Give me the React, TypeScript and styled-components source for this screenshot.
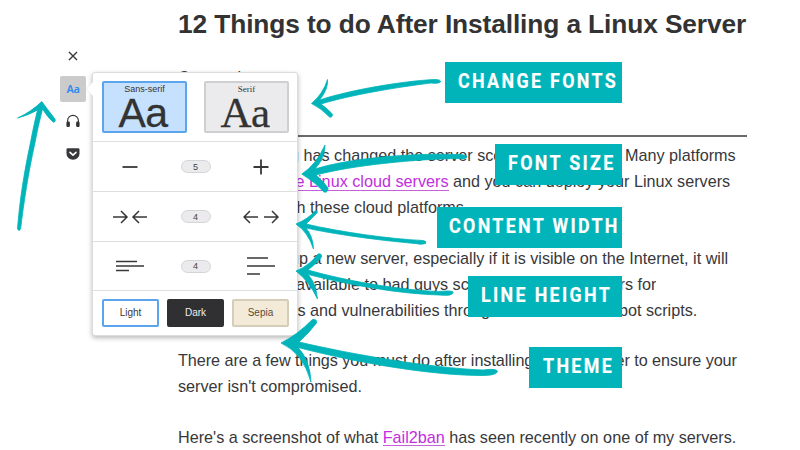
import React from 'react';
import styled, { createGlobalStyle } from 'styled-components';

const Global = createGlobalStyle`
  * { box-sizing: border-box; }
  body { margin: 0; background: #fff; overflow: hidden; }
`;

const TEAL = '#00b4b9';

const Page = styled.div`
  position: relative;
  width: 800px;
  height: 450px;
  overflow: hidden;
  background: #fff;
  color: #38383b;
  font-family: 'Liberation Sans', Arial, sans-serif;
`;

const Article = styled.article`
  width: 569px;
  margin-left: 178px;
  padding-top: 7px;
`;

const Title = styled.h1`
  margin: 0;
  font-size: 26.3px;
  letter-spacing: -0.11px;
  line-height: 34px;
  font-weight: 700;
  color: #333;
  white-space: nowrap;
`;

const Byline = styled.div`
  margin-top: 26px;
  height: 70px;
  font-size: 16px;
  line-height: 21px;
  border-bottom: 2px solid #6a6a6d;
`;

const Paragraph = styled.div`
  margin-top: 24.6px;
  &:first-of-type { margin-top: 0; }
`;

const Body = styled.div`
  padding-top: 5px;
  font-size: 16.2px;
`;

const Line = styled.div<{ $space?: number }>`
  display: flex;
  height: 26px;
  line-height: 26px;
  letter-spacing: ${(p) => p.$space ?? 0}px;
  white-space: pre;
`;

const Run = styled.span<{ $w?: number; $end?: boolean }>`
  display: flex;
  flex: none;
  width: ${(p) => (p.$w ? `${p.$w}px` : 'auto')};
  justify-content: ${(p) => (p.$end ? 'flex-end' : 'flex-start')};
  overflow: hidden;
`;

const Link = styled.a`
  height: 22.5px;
  color: #c22ee0;
  border-bottom: 1px solid #c860dc;
`;

const Toolbar = styled.nav`
  position: absolute;
  left: 60px;
  top: 43px;
  display: flex;
  flex-direction: column;
  gap: 6.5px;
`;

const Tool = styled.button<{ $active?: boolean }>`
  display: flex;
  align-items: center;
  justify-content: center;
  width: 26px;
  height: 26px;
  padding: 0;
  border: 0;
  border-radius: 2px;
  color: #3a3a3d;
  background: ${(p) => (p.$active ? '#cbcbcb' : 'transparent')};
`;

const ToolText = styled.span`
  font: 600 11px/1 'Noto Sans', sans-serif;
  letter-spacing: -0.4px;
  color: #2f8aee;
`;

const Popup = styled.section`
  position: absolute;
  left: 92px;
  top: 72px;
  width: 206px;
  height: 264px;
  border: 1px solid #dcdcdc;
  border-radius: 3px;
  background: #fff;
  box-shadow: 0 2px 5px rgba(0, 0, 0, 0.28);
`;

const Beak = styled.svg`
  position: absolute;
  left: -8px;
  top: 8px;
`;

const Row = styled.div<{ $h: number; $last?: boolean }>`
  display: flex;
  align-items: center;
  justify-content: space-between;
  height: ${(p) => p.$h}px;
  padding: 0 8px 0 9px;
  border-bottom: ${(p) => (p.$last ? '0' : '1px solid #dedee0')};
`;

const FontCard = styled.button<{ $active?: boolean; $serif?: boolean }>`
  display: flex;
  flex-direction: column;
  align-items: center;
  width: 85px;
  height: 52px;
  padding: 1px 0 0;
  border: 2px solid ${(p) => (p.$active ? '#5aa5ee' : '#cfcfd2')};
  border-radius: 2px;
  background: ${(p) => (p.$active ? '#c6e1fe' : '#ebebee')};
  color: #333;
  font-family: ${(p) => (p.$serif ? "'Liberation Serif', serif" : "'Liberation Sans', sans-serif")};
`;

const CardName = styled.span`
  font-size: 9px;
  line-height: 11px;
`;

const Sample = styled.span<{ $size: number }>`
  margin: -3px 3px 0 0;
  font-size: ${(p) => p.$size}px;
  line-height: 42px;
  letter-spacing: -0.5px;
  -webkit-text-stroke: 0.3px #333;
`;

const Control = styled.span`
  display: flex;
  justify-content: center;
  width: 56px;
`;

const Value = styled.span`
  display: flex;
  align-items: center;
  justify-content: center;
  width: 30px;
  height: 13px;
  border: 1px solid #d5d5d8;
  border-radius: 7px;
  background: #ebebee;
  font-size: 9px;
  color: #444;
`;

const Theme = styled.button<{ $bg: string; $fg: string; $line: string }>`
  width: 57px;
  height: 28px;
  padding: 0;
  border: 2px solid ${(p) => p.$line};
  border-radius: 2px;
  background: ${(p) => p.$bg};
  color: ${(p) => p.$fg};
  font: 10px/1 'Liberation Sans', sans-serif;
`;

const Marks = styled.svg`
  position: absolute;
  inset: 0;
`;

const Label = styled.div<{ $top: number; $w: number; $pad: number }>`
  position: absolute;
  top: ${(p) => p.$top}px;
  right: 178.5px;
  width: ${(p) => p.$w}px;
  height: 40.7px;
  padding-left: ${(p) => p.$pad}px;
  background: ${TEAL};
  color: #fff;
  font: 700 21px/38px Roboto, sans-serif;
  white-space: nowrap;
`;

const Condensed = styled.span`
  display: inline-block;
  transform: scaleX(0.85);
  transform-origin: left;
  letter-spacing: 2.75px;
  -webkit-text-stroke: 0.2px #fff;
`;

const labels = [
  { text: 'CHANGE FONTS', top: 62.3, w: 177, pad: 13.5 },
  { text: 'FONT SIZE', top: 144.4, w: 126.3, pad: 13 },
  { text: 'CONTENT WIDTH', top: 207.4, w: 185, pad: 12 },
  { text: 'LINE HEIGHT', top: 276.3, w: 153.3, pad: 13 },
  { text: 'THEME', top: 347, w: 92.5, pad: 14 },
];

const Stroke = ({ d, w = 1.4 }: { d: string; w?: number }) => (
  <path d={d} fill="none" stroke="#38383b" strokeWidth={w} />
);

export default function App() {
  return (
    <Page>
      <Global />
      <Article>
        <Title>12 Things to do After Installing a Linux Server</Title>
        <Byline>Conversity</Byline>
        <Body>
          <Paragraph>
            <Line>
              <Run $w={125.5} $end>Cloud computing </Run>
              <Run $w={321.5}>has changed the server scene completely.</Run>
              <Run>Many platforms</Run>
            </Line>
            <Line>
              <Run $w={270.5} $end>now <Link>offer simple Linux cloud servers</Link></Run>
              <Run> and you can deploy your Linux servers</Run>
            </Line>
            <Line>
              <Run $w={132} $end>easily with </Run>
              <Run>these cloud platforms.</Run>
            </Line>
          </Paragraph>
          <Paragraph>
            <Line>
              <Run $w={134.5} $end>When you set up </Run>
              <Run>a new server, especially if it is visible on the Internet, it will</Run>
            </Line>
            <Line>
              <Run $w={118} $end>instantly made </Run>
              <Run $w={284}>available to bad guys scouring all</Run>
              <Run>servers for</Run>
            </Line>
            <Line>
              <Run $w={132} $end>weaknesses </Run>
              <Run $w={309}>and vulnerabilities through automated</Run>
              <Run>bot scripts.</Run>
            </Line>
          </Paragraph>
          <Paragraph>
            <Line $space={-0.055}>There are a few things you must do after installing a new server to ensure your</Line>
            <Line>server isn't compromised.</Line>
          </Paragraph>
          <Paragraph>
            <Line>Here's a screenshot of what <Link>Fail2ban</Link> has seen recently on one of my servers.</Line>
          </Paragraph>
        </Body>
      </Article>

      <Toolbar>
        <Tool aria-label="Close">
          <svg width="14" height="14"><Stroke d="M3 3l8 8M11 3l-8 8" w={1.4} /></svg>
        </Tool>
        <Tool $active><ToolText>Aa</ToolText></Tool>
        <Tool aria-label="Listen">
          <svg width="14" height="14" viewBox="0 0 14 14">
            <path d="M1.600 9V6.700a5.400 5.400 0 0 1 10.800 0V9" fill="none" stroke="#38383b" strokeWidth="1.2" />
            <rect x=".4" y="7.600" width="3.500" height="5.400" rx="1.300" fill="#333" />
            <rect x="10.100" y="7.600" width="3.500" height="5.400" rx="1.300" fill="#333" />
          </svg>
        </Tool>
        <Tool aria-label="Save">
          <svg width="14" height="14" viewBox="0 0 14 14">
            <path d="M1.800 1.200h10.400q1.300 0 1.300 1.300v4.200a6.500 6.100 0 0 1-13 0V2.500q0-1.300 1.300-1.300z" fill="#38383b" />
            <path d="M4 5.300l3 2.900 3-2.900" fill="none" stroke="#fff" strokeWidth="1.600" strokeLinecap="round" strokeLinejoin="round" />
          </svg>
        </Tool>
      </Toolbar>

      <Popup>
        <Beak width="9" height="16"><path d="M9 0L1 8l8 8z" fill="#fff" /><path d="M8 1L1 8l7 7" fill="none" stroke="#e4e4e4" strokeWidth=".6" /></Beak>
        <Row $h={69}>
          <FontCard $active><CardName>Sans-serif</CardName><Sample $size={41}>Aa</Sample></FontCard>
          <FontCard $serif><CardName>Serif</CardName><Sample $size={43}>Aa</Sample></FontCard>
        </Row>
        <Row $h={50}>
          <Control><svg width="16" height="16"><Stroke d="M.5 8h15" w={1.8} /></svg></Control>
          <Value>5</Value>
          <Control><svg width="16" height="16"><Stroke d="M.5 8h15M8 .5v15" w={1.8} /></svg></Control>
        </Row>
        <Row $h={50}>
          <Control><svg width="36" height="14"><Stroke d="M1 7h14M9 1l6 6l-6 6M35 7H21M27 1l-6 6l6 6" w={1.5} /></svg></Control>
          <Value>4</Value>
          <Control><svg width="36" height="14"><Stroke d="M15 7H1M7 1L1 7l6 6M21 7h14M29 1l6 6l-6 6" w={1.5} /></svg></Control>
        </Row>
        <Row $h={49}>
          <Control><svg width="28" height="20"><Stroke d="M0 5.500h21M0 10h28M0 14.500h13" w={1.5} /></svg></Control>
          <Value>4</Value>
          <Control><svg width="28" height="20"><Stroke d="M0 2h21M0 10h28M0 18h13" w={1.5} /></svg></Control>
        </Row>
        <Row $h={43} $last>
          <Theme $bg="#fff" $fg="#38383b" $line="#5aa5ee">Light</Theme>
          <Theme $bg="#303033" $fg="#eee" $line="#303033">Dark</Theme>
          <Theme $bg="#f3ead7" $fg="#5b4b3c" $line="#d6ccba">Sepia</Theme>
        </Row>
      </Popup>

      <Marks width="800" height="450" viewBox="0 0 800 450" fill={TEAL} stroke={TEAL} strokeWidth="0.8" strokeLinejoin="round">
        <path d="M17.500 229C19.500 200 25 168 30 145Q34 124 37.500 110Q29 115 17.500 118Q31 112 41.800 101.500Q45 106 55 119Q56 122 53.500 122.300Q48 118 42.500 109Q38 126 34.500 145C28.500 172 23.500 204 20.600 229Q19 232 17.500 229z" />
        <path d="M311.500 103.500Q323 94 327.500 79.500Q328.500 89 319.500 100C350 90 402 81 435 79.500Q441 79.500 440.500 82Q438 84 431 83C398 87 350 95 321 104Q329 110 332.700 114.500Q332 118 329.500 117Q321 108 311.500 103.500z" />
        <path d="M301.800 174Q316 165 325 145Q325 158 315 169C350 158 412 153 455 154.500Q466 154 467 157Q465 160 459 158.500C417 159 354 165 316 175Q324 182 328 188Q328 193 324 192Q315 182 301.800 174z" />
        <path d="M296 224Q308 219 315 211Q318 210 317 213Q311 219 306 224C340 232 390 239 423 240.500Q427 241 425.500 243.500Q422 245 415 243.500C376 240 333 234 306 228Q313 236 313.500 249Q308 232 296 224z" />
        <path d="M296 271Q309 266 318 254Q322 253 321.500 257Q316 264 308 270C346 281 400 290 438 291.500Q454 290 453 292.500Q452 296 443 295.200C396 294 346 284 308 274.500Q316 283 317.500 299Q309 281 296 271z" />
        <path d="M281 343Q297 335 312.500 319.500Q317.500 319 316.500 323Q309 333 299 342C350 354 430 368 483 370Q498 368 497.500 372Q494 376 480 375.500C425 375 350 361 298 347.500Q310 360 311 382Q303 353 281 343z" />
      </Marks>

      {labels.map((l) => (
        <Label key={l.text} $top={l.top} $w={l.w} $pad={l.pad}>
          <Condensed>{l.text}</Condensed>
        </Label>
      ))}
    </Page>
  );
}
